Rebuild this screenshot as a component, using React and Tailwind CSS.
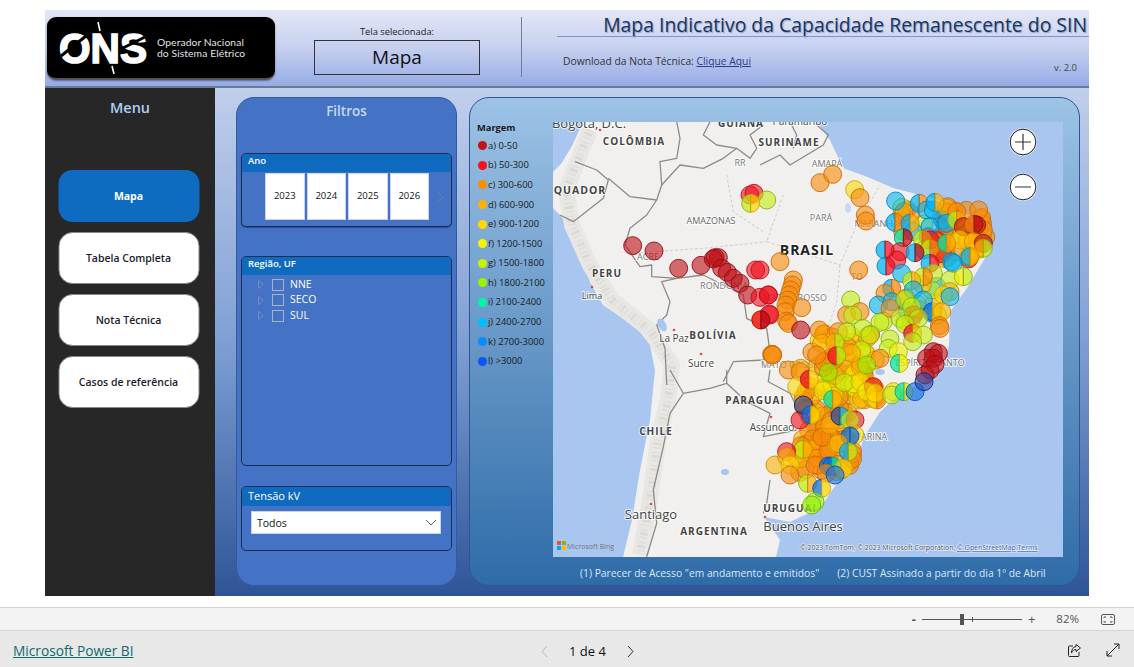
import React from "react";

const C = { a:"#c00f17", b:"#f00f1e", c:"#f98a08", d:"#ffb000", e:"#ffd800", f:"#f0f000", g:"#c4ee10", h:"#96f000", i:"#00e8a0", j:"#00b4f5", k:"#0a6fe8", l:"#0a46c8", m:"#2a4aa8" };
const S = { a:"#8c1015", b:"#b5101c", c:"#c86a08", d:"#c88a08", e:"#c8a808", f:"#b0b008", g:"#8cae10", h:"#6cb408", i:"#08a078", j:"#0884b8", k:"#0a4fb0", l:"#0a3498", m:"#14246e" };
const z4 = ([X,Y]) => [470+X/3, 115+Y/3];
const z5 = ([X,Y]) => [760+X/3, 115+Y/3];
const z6 = ([X,Y]) => [550+X/3, 370+Y/3];
const z11 = ([X,Y]) => [760+X/3, 340+Y/3];
const line = (fn, arr) => arr.map(p => fn(p).map(v => v.toFixed(1)).join(",")).join(" ");

const L4 = [[840,240,"b"],[852,235,"b"],[890,255,"g"],[842,265,"g","e"],[488,392,"a"],[552,408,"a"],[626,460,"a"],[693,451,"a"],[745,428,"a"],[735,428,"a"],[730,432,"a"],[755,460,"a"],[772,472,"a"],[790,490,"a"],[810,505,"a"],[833,540,"a"],[870,547,"b"],[895,540,"b"],[857,465,"b"],[900,600,"b"],[872,614,"c","a"],[905,718,"c"]];
const L5 = [[180,203,"c"],[218,178,"c"],[284,224,"e"],[300,248,"c"],[316,300,"c"],[318,318,"c"],[60,440,"c"],[296,465,"c"],[100,495,"c"],[97,510,"c"],[92,525,"c"],[88,540,"c"],[83,555,"c"],[78,570,"c"],[75,590,"c"],[80,618,"c"],[85,625,"c"],[25,540,"b"],[28,597,"b"],[3,615,"b","a"],[0,465,"b"],[125,578,"c"],[122,645,"a"],[178,645,"c"],[235,650,"c"],
[432,290,"c"],[407,258,"j"],[405,322,"j","c"],[478,265,"j","c"],[500,285,"j"],[520,285,"j"],[562,280,"d"],[590,290,"c"],[525,262,"j","d"],[510,335,"j"],[560,325,"j"],[450,325,"j","d"],[590,315,"g","d"],[670,345,"c"],[650,330,"a"],[610,335,"a"],[642,328,"c","a"],[510,375,"b"],[430,368,"i","a"],[600,375,"e"],[640,380,"d"],[487,373,"g","c"],[510,400,"g","c"],[560,385,"i","d"],[670,385,"a"],[670,400,"d","g"],[420,410,"b"],[410,435,"b"],[375,405,"j","b"],[378,453,"j","b"],[465,413,"j","a"],[510,445,"j","b"],[575,440,"j"],[580,445,"j"],[630,425,"j","d"],[425,475,"j"],[520,475,"g"],[490,485,"g","c"],[455,497,"g","d"],[570,495,"g"],[610,485,"f","g"],[395,520,"j","c"],[570,530,"d"],[550,540,"e"],[570,545,"j"],[375,535,"c"],[355,570,"j"],[395,560,"j"],[390,580,"c"],[460,525,"j"],[490,555,"j"],[435,553,"g"],[460,600,"b"],[455,575,"g"],[517,590,"k","e"],[545,590,"d"],[538,632,"c"],[540,640,"c"],[272,555,"g"],[260,600,"c"],[300,590,"c"],[278,600,"g"],[420,610,"g"],[475,610,"g"],[435,628,"g"],[360,622,"g"],[308,640,"g"],[330,660,"g"],[260,650,"g"],[458,655,"b","d"],[490,660,"g"],[390,672,"g"],[458,680,"g"],[185,685,"d"],[225,682,"d","g"],[385,700,"g"],[415,710,"f"],[305,705,"g"],[275,715,"d"],[170,720,"c"],[230,722,"b","g"],[360,730,"c"],[320,750,"h"],[418,745,"i","f"],[37,718,"c"],
[520,710,"a"],[535,715,"a"],[500,730,"a"],[520,730,"a"],[525,748,"a"],[510,765,"a"],[495,780,"a"]];

// dense fill: deterministic scatter
let seed = 17;
const rnd = () => (seed = (seed * 16807) % 2147483647) / 2147483647;
const dense = [];
const scatter = (fn, x0, y0, x1, y1, n, cs) => { for (let i=0;i<n;i++){ const p = fn([x0+rnd()*(x1-x0), y0+rnd()*(y1-y0)]); dense.push([p[0],p[1],cs[Math.floor(rnd()*cs.length)]]); } };
scatter(z11, 130, 130, 280, 300, 44, ["c","c","d","c"]);
scatter(z11, 100, 290, 280, 400, 42, ["c","c","d","c","c"]);
scatter(z11, 180, 60, 320, 170, 30, ["d","e","d","c","f"]);
scatter(z11, 280, 130, 350, 190, 12, ["e","f","d"]);
scatter(z5, 150, 650, 350, 760, 26, ["d","c","e","d"]);
scatter(z5, 540, 270, 680, 440, 34, ["d","e","c","b","d","c"]);
scatter(z5, 420, 270, 560, 420, 16, ["j","c","b","g"]);
scatter(z5, 360, 500, 540, 620, 14, ["c","j","g","d"]);

const L11 = [[38,45,"c"],[85,90,"c"],[122,85,"d"],[120,95,"c"],[110,140,"e"],[148,118,"b","e"],[205,97,"h"],[253,128,"g"],[300,125,"e"],[340,140,"b"],[320,155,"f"],[350,180,"e","c"],[345,160,"e"],[400,155,"e"],[395,165,"g"],[432,155,"i","g"],[465,155,"k"],[492,125,"m"],[120,240,"b"],[130,195,"m"],[152,225,"k","e"],[218,178,"i","d"],[210,255,"d"],[240,228,"m","j"],[285,240,"b"],[270,240,"g"],[285,285,"e"],[270,288,"k","k"],[235,310,"d"],[265,335,"j","g"],[130,328,"g","d"],[80,335,"b"],[45,375,"d"],[80,350,"d"],[90,375,"e"],[90,405,"c"],[165,375,"c"],[205,378,"k","k"],[215,378,"k","i"],[250,385,"e"],[198,400,"c"],[225,405,"k"],[143,430,"g","d"],[185,445,"k","e"],[165,485,"h"],[155,495,"h"]];

const B = [
  ...dense,
  ...L4.map(([X,Y,...c]) => [...z4([X,Y]), ...c]),
  ...L5.map(([X,Y,...c]) => [...z5([X,Y]), ...c]),
  ...L11.map(([X,Y,...c]) => [...z11([X,Y]), ...c]),
];

function Bubble({ b }) {
  const [x, y, c1, c2] = b;
  const r = 9;
  if (!c2) return <circle cx={x} cy={y} r={r} fill={C[c1]} fillOpacity="0.6" stroke={S[c1]} strokeWidth="0.9" />;
  return (
    <g fillOpacity="0.72" strokeWidth="0.9">
      <path d={`M${x} ${y-r}A${r} ${r} 0 0 0 ${x} ${y+r}Z`} fill={C[c1]} stroke={S[c1]} />
      <path d={`M${x} ${y-r}A${r} ${r} 0 0 1 ${x} ${y+r}Z`} fill={C[c2]} stroke={S[c2]} />
    </g>
  );
}

const land = [
  ...[[583,122],[572,146],[561,164],[553,172],[553,208],[560,215],[570,228],[577,248],[590,282],[603,305],[637,328],[650,345],[655,370]],
  ...[[650,420],[640,470],[632,520],[623,557],[776,557],[780,540],[772,528],[764,517],[790,522],[807,514],[822,506],[832,490],[857,460],[864,437],[880,412],[897,396],[920,384],[943,367],[949,345],[950,312],[967,288],[990,250],[984,228],[973,218],[947,202],[893,188],[870,178],[843,168],[830,140],[817,122]],
].map(p => p.join(",")).join(" ");

function T({ x, y, s = 10, b, sp, fill = "#444", children, anchor = "middle" }) {
  return (
    <text x={x} y={y} fontSize={s} fontWeight={b ? 700 : 400} letterSpacing={sp} fill={fill} textAnchor={anchor} stroke="#fff" strokeOpacity="0.75" strokeWidth="2" paintOrder="stroke">{children}</text>
  );
}

function MapView() {
  const border = { fill: "none", stroke: "#8b8b88", strokeWidth: 1.3, strokeLinejoin: "round" };
  const state = { fill: "none", stroke: "#c8c8c6", strokeWidth: 0.9, strokeDasharray: "3 2" };
  const andes = "590,130 578,160 566,190 572,225 590,265 612,300 650,330 672,365 668,400 658,440 650,500 640,555";
  return (
    <svg viewBox="553 122 510 435" className="w-[510px] h-[435px] block font-['Open_Sans',sans-serif]">
      <rect x="553" y="122" width="510" height="435" fill="#a9c6f1" />
      <polygon points={land} fill="#f1f0ee" />
      <polyline points={andes} fill="none" stroke="#e9e7e3" strokeWidth="16" strokeLinejoin="round" />
      <polyline points={andes} fill="none" stroke="#dcdad6" strokeWidth="8" strokeDasharray="1 2 3 2 1 4" strokeLinejoin="round" />
      <polyline points={line(z4, [[315,140],[380,165],[415,195],[400,250],[310,320],[270,300]])} {...border} />
      <polyline points={line(z4, [[415,190],[480,245],[560,255],[530,300],[480,340],[465,390],[510,455],[545,450],[545,485],[620,490],[575,500],[600,560],[590,600],[560,630],[585,700],[590,810]])} {...border} />
      <polyline points={line(z4, [[560,255],[575,210],[570,140],[620,130],[630,70],[620,20]])} {...border} />
      <polyline points={line(z4, [[575,210],[630,150],[700,160],[760,130],[800,100],[840,130],[860,100],[840,60],[880,30]])} {...border} />
      <polyline points={line(z4, [[720,20],[700,60],[740,90],[800,100]])} {...border} />
      <polyline points={line(z4, [[620,490],[700,480],[820,540],[830,610],[890,640],[900,710],[880,735],[790,740],[760,800]])} {...border} />
      <polyline points={line(z5, [[0,150],[60,120],[90,150],[190,90],[205,60],[170,30]])} {...border} />
      <polyline points={line(z5, [[90,20],[110,60],[100,100]])} {...border} />
      <polyline points={line(z6, [[360,0],[400,70],[360,130],[340,230],[310,360],[320,460],[290,560]])} {...border} />
      <polyline points={line(z6, [[400,70],[480,55],[530,40],[590,95],[660,130],[640,200],[740,180]])} {...border} />
      <polyline points={line(z6, [[530,40],[530,0]])} {...border} />
      <polyline points={line(z6, [[660,0],[655,35],[720,70],[740,110]])} {...border} />
      <polyline points={line(z6, [[660,330],[650,400],[640,430]])} {...border} />
      <polyline points={line(z5, [[70,240],[20,380],[240,450],[290,330],[360,210]])} {...state} />
      <polyline points={line(z5, [[240,450],[230,560],[190,680],[120,720]])} {...state} />
      <polyline points={line(z4, [[770,180],[790,290],[880,350]])} {...state} />
      <polyline points={line(z4, [[480,415],[700,400],[890,380]])} {...state} />
      <ellipse cx="662" cy="325" rx="4" ry="7" fill="#a9c6f1" transform="rotate(-30 662 325)" />
      <ellipse cx="725" cy="472" rx="4" ry="3" fill="#a9c6f1" />
      <ellipse cx="880" cy="372" rx="5" ry="3" fill="#a9c6f1" />
      <ellipse cx="848" cy="208" rx="3" ry="5" fill="#c5d8f5" />

      <T x="589" y="128" s={13}>Bogotá, D.C.</T>
      <T x="634" y="145" b sp={1}>COLÔMBIA</T>
      <T x="741" y="127" b sp={1}>GUIANA</T>
      <T x="800" y="125">Paramaribo</T>
      <T x="789" y="146" b sp={1}>SURINAME</T>
      <T x="580" y="194" b sp={1} s={10.5}>QUADOR</T>
      <T x="740" y="166" fill="#777" s={9}>RR</T>
      <T x="711" y="224" fill="#666" s={9}>AMAZONAS</T>
      <T x="827" y="167" fill="#777" s={9}>AMAPÁ</T>
      <T x="821" y="221" fill="#777" s={9}>PARÁ</T>
      <T x="807" y="255" b sp={1} s={14} fill="#222">BRASIL</T>
      <T x="880" y="227" fill="#777" s={9}>MARANHÃO</T>
      <T x="607" y="277" b sp={1} s={10}>PERU</T>
      <T x="592" y="299" s={9}>Lima</T>
      <T x="648" y="260" fill="#777" s={9}>ACRE</T>
      <T x="724" y="289" fill="#777" s={9}>RONDÔNIA</T>
      <T x="795" y="301" fill="#777" s={9}>MATO GROSSO</T>
      <T x="857" y="280" fill="#777" s={9}>TO</T>
      <T x="713" y="339" b sp={1} s={10}>BOLÍVIA</T>
      <T x="674" y="342" s={10}>La Paz</T>
      <T x="701" y="367" s={10}>Sucre</T>
      <T x="793" y="368" fill="#777" s={9}>MATO GROSSO</T>
      <T x="755" y="404" b sp={1} s={10}>PARAGUAI</T>
      <T x="772" y="431" s={10}>Assuncao</T>
      <T x="656" y="435" b sp={1} s={10}>CHILE</T>
      <T x="651" y="519" s={13}>Santiago</T>
      <T x="714" y="535" b sp={1} s={10}>ARGENTINA</T>
      <T x="790" y="512" b sp={1} s={10}>URUGUAI</T>
      <T x="803" y="531" s={13}>Buenos Aires</T>
      <T x="930" y="366" fill="#777" s={9}>ESPÍRITO SANTO</T>
      <T x="866" y="440" fill="#777" s={9}>CATARINA</T>
      {[[600,130],[592,287],[674,330],[701,354],[771,417],[651,504],[765,517]].map(([x,y],i)=><circle key={i} cx={x} cy={y} r="1.3" fill="#d84a5a"/>)}

      {B.map((b,i)=><Bubble key={i} b={b}/>)}

      <g>
        <rect x="557" y="541" width="4" height="4" fill="#f25022"/><rect x="562" y="541" width="4" height="4" fill="#7fba00"/>
        <rect x="557" y="546" width="4" height="4" fill="#00a4ef"/><rect x="562" y="546" width="4" height="4" fill="#ffb900"/>
        <text x="567" y="549" fontSize="7" fill="#767676">Microsoft Bing</text>
      </g>
      <text x="800" y="550" fontSize="6.9" fill="#555" stroke="#fff" strokeOpacity="0.6" strokeWidth="1.5" paintOrder="stroke">© 2023 TomTom, © 2023 Microsoft Corporation, <tspan fill="#3c63a8" textDecoration="underline">© OpenStreetMap</tspan>  <tspan fill="#3c63a8" textDecoration="underline">Terms</tspan></text>
      {[[1023,142,"p"],[1023,187,"m"]].map(([x,y,k])=>(
        <g key={k}>
          <circle cx={x} cy={y} r="14" fill="#d6e2f6"/>
          <circle cx={x} cy={y} r="12.8" fill="#fff" stroke="#222" strokeWidth="1"/>
          <path d={k==="p"?`M${x-8} ${y}H${x+8}M${x} ${y-8}V${y+8}`:`M${x-8} ${y}H${x+8}`} stroke="#333" strokeWidth="1.2"/>
        </g>
      ))}
    </svg>
  );
}

const legend = [["a","a) 0-50"],["b","b) 50-300"],["c","c) 300-600"],["d","d) 600-900"],["e","e) 900-1200"],["f","f) 1200-1500"],["g","g) 1500-1800"],["h","h) 1800-2100"],["i","i) 2100-2400"],["j","j) 2400-2700"],["k","k) 2700-3000"],["l","l) >3000"]];
const legendCol = { a:"#c0141c", b:"#f5101e", c:"#ff8c00", d:"#ffb000", e:"#ffd800", f:"#f4f400", g:"#c4f400", h:"#98f400", i:"#00f8a8", j:"#00beff", k:"#0a8aff", l:"#0a55f5" };

function Card({ title, className, children, small }) {
  return (
    <div className={`mx-[4px] rounded-[5px] border border-[#1c2c54] bg-[#4472c4] overflow-hidden ${className}`}>
      <div className={`bg-[#0f6bbf] text-white ${small ? "h-[18px] text-[9.5px] font-semibold pl-[6px] leading-[14px]" : "h-[19px] text-[11px] pl-[6px] leading-[18px]"}`}>{title}</div>
      {children}
    </div>
  );
}

const Tri = () => (
  <svg width="6" height="9" viewBox="0 0 6 9" className="shrink-0"><path d="M.5.5 5.5 4.5.5 8.5Z" fill="none" stroke="#6f8cc4" strokeWidth="1"/></svg>
);

export default function App() {
  return (
    <div className="w-[1134px] h-[667px] bg-white overflow-hidden flex flex-col font-['Open_Sans',sans-serif]">
      <div className="ml-[45px] mt-[10px] w-[1044px] h-[586px] flex flex-col shrink-0">
        {/* header */}
        <header className="h-[78px] flex bg-gradient-to-b from-[#e3e7f7] via-[#c6d0ef] to-[#96abe6] border-b-2 border-b-[#6b7a99] shrink-0">
          <div className="ml-[2px] mt-[7px] w-[228px] h-[63px] bg-black rounded-[9px] border-b-2 border-[#555] shadow-[0_1px_2px_#0006] flex items-center pl-[12px] gap-[8px] shrink-0">
            <svg width="90" height="52" viewBox="0 0 90 52" className="shrink-0">
              <text x="0" y="41" fontSize="42" fontWeight="700" fill="#fff" stroke="#fff" strokeWidth="1.6" fontFamily="Liberation Sans" textLength="88" lengthAdjust="spacingAndGlyphs">ONS</text>
              <path d="M2 34 32 10" stroke="#000" strokeWidth="3"/>
              <path d="M60 28 88 14" stroke="#000" strokeWidth="3"/>
              <path d="M39 0 41 9M53 44 55 52" stroke="#fff" strokeWidth="1.6"/>
            </svg>
            <div className="text-[#e2e2e2] text-[10.3px] leading-[11px] font-['Lato',sans-serif] tracking-[0.1px] whitespace-nowrap">Operador Nacional<br/>do Sistema Elétrico</div>
          </div>
          <div className="ml-[39px] w-[166px] shrink-0 flex flex-col items-center">
            <div className="h-[13px] mt-[15px] text-[9.3px] leading-[13px] text-[#222] whitespace-nowrap">Tela selecionada:</div>
            <div className="mt-[2px] w-[166px] h-[35px] border border-[#333] flex items-center justify-center text-[19px] text-[#111]">Mapa</div>
          </div>
          <div className="ml-[41px] mt-[7px] h-[60px] w-px bg-[#6f7d9c] shrink-0" />
          <div className="ml-[35px] flex-1 flex flex-col">
            <div className="h-[26px] text-right pr-[2px] pt-[3px] text-[19.4px] leading-[24px] text-[#1b365f] whitespace-nowrap [text-shadow:1px_1px_1px_#8ea0c8]">Mapa Indicativo da Capacidade Remanescente do SIN</div>
            <div className="h-px bg-[#7b95d0]" />
            <div className="pl-[6px] mt-[17px] text-[10.3px] leading-[14px] text-[#333] whitespace-nowrap">Download da Nota Técnica: <span className="underline text-[#2a3f86]">Clique Aqui</span></div>
            <div className="text-right pr-[12px] mt-[-9px] pt-[2px] text-[9.5px] leading-[14px] text-[#444]">v. 2.0</div>
          </div>
        </header>
        <div className="flex-1 flex min-h-0">
          {/* sidebar */}
          <aside className="w-[170px] bg-[#272727] shrink-0 flex flex-col items-center">
            <div className="mt-[10px] h-[20px] text-[14.5px] leading-[20px] font-semibold text-[#a9d1f5]">Menu</div>
            <div className="mt-[52px] flex flex-col gap-[10px] -translate-x-[1.5px]">
              <div className="w-[141px] h-[52px] pt-[2px] rounded-[14px] bg-[#0f6bbf] text-white flex items-center justify-center text-[10.5px] font-bold">Mapa</div>
              {["Tabela Completa","Nota Técnica","Casos de referência"].map(t=>(
                <div key={t} className="w-[141px] h-[52px] pt-[2px] rounded-[14px] bg-white border border-[#888] flex items-center justify-center text-[10.5px] font-semibold text-[#1c1c2c]">{t}</div>
              ))}
            </div>
          </aside>
          {/* content */}
          <main className="flex-1 flex gap-[12px] pl-[21px] pr-[9px] pt-[9px] pb-[10px] bg-gradient-to-b from-[#c0cfeb] via-[#7f9fd4] to-[#2f5597]">
            <section className="w-[221px] shrink-0 rounded-[18px] bg-[#4472c4] border border-[#35599e] flex flex-col">
              <div className="h-[30px] mt-[1px] mb-[2px] text-center text-[13.5px] leading-[24px] font-semibold text-[#c4dcf4]">Filtros</div>
              <Card title="Ano" small className="mt-[22px] h-[74px] shadow-[0_1px_1px_#1c2c5480]">
                <div className="flex items-center pl-[23px] gap-[2px] pt-[1px]">
                  {["2023","2024","2025","2026"].map(y=>(
                    <div key={y} className="w-[39.5px] h-[47px] bg-white border border-[#c7d3ee] flex items-center justify-center text-[9.5px] text-[#111]">{y}</div>
                  ))}
                  <svg width="9" height="14" viewBox="0 0 9 14" className="ml-[5px]"><path d="M1 1l6 6-6 6" fill="none" stroke="#6d7fa8" strokeWidth="1"/></svg>
                </div>
              </Card>
              <Card title="Região, UF" small className="mt-[29px] h-[210px]">
                <div className="pl-[16px] pt-[2px] flex flex-col">
                  {["NNE","SECO","SUL"].map(t=>(
                    <div key={t} className="h-[15.5px] flex items-center">
                      <Tri />
                      <span className="ml-[8px] w-[12px] h-[12px] border border-[#a9b2c4] shrink-0" />
                      <span className="ml-[6px] text-[10.5px] text-white">{t}</span>
                    </div>
                  ))}
                </div>
              </Card>
              <Card title="Tensão kV" className="mt-[20px] h-[65px]">
                <div className="ml-[9px] mr-[10px] mt-[5px] h-[23px] bg-white border border-[#c7d3ee] flex items-center justify-between pl-[5px] pr-[3px] text-[10.5px] text-[#111]">
                  <span className="translate-y-px">Todos</span>
                  <svg width="12" height="7" viewBox="0 0 12 7"><path d="M1 1l5 5 5-5" fill="none" stroke="#666" strokeWidth="1"/></svg>
                </div>
              </Card>
            </section>
            <section className="w-[611px] shrink-0 rounded-[20px] border border-[#2f5597] bg-gradient-to-b from-[#9dc3e6] to-[#2e6ca8] flex flex-col overflow-hidden">
              <div className="flex pt-[24px] pl-[7px] h-[460px] shrink-0">
                <div className="w-[76px] shrink-0">
                  <div className="h-[16px] -mt-[1px] mb-[-1px] text-[9.3px] leading-[14px] font-bold text-[#1a1a1a]">Margem</div>
                  <div className="grid auto-rows-[19.6px] pl-[1px]">
                    {legend.map(([k,t])=>(
                      <div key={k} className="flex items-center text-[9.4px] text-[#1a1a1a] whitespace-nowrap">
                        <span className="w-[9px] h-[9px] rounded-full mr-[1px] shrink-0" style={{background:legendCol[k]}} />
                        <span>{t}</span>
                      </div>
                    ))}
                  </div>
                </div>
                <MapView />
              </div>
              <div className="flex pl-[110px] pt-[7px] gap-[18px] text-[10.3px] leading-[16px] text-[#dbe7f5] whitespace-nowrap">
                <span>(1) Parecer de Acesso "em andamento e emitidos"</span>
                <span>(2) CUST Assinado a partir do dia 1º de Abril</span>
              </div>
            </section>
          </main>
        </div>
      </div>
      {/* Power BI chrome */}
      <div className="mt-[11px] h-[24px] shrink-0 bg-[#f3f3f3] border-y border-[#d4d4d4] flex items-center justify-end pr-[19px] text-[#555]">
        <span className="text-[13px] font-bold mr-[6px] leading-none">-</span>
        <div className="relative w-[100px] h-px bg-[#555] mr-[6px]">
          <span className="absolute left-[38px] -top-[5px] w-[4px] h-[11px] bg-[#555]" />
          <span className="absolute left-[50px] -top-[2px] w-px h-[5px] bg-[#555]" />
        </div>
        <span className="text-[13px] mr-[21px] leading-none">+</span>
        <span className="text-[11.5px] mr-[22px]">82%</span>
        <svg width="14" height="11" viewBox="0 0 14 11"><rect x=".5" y=".5" width="13" height="10" rx="1.5" fill="none" stroke="#555"/><path d="M3 4V3h2M9 3h2v1M11 7v1H9M5 8H3V7" fill="none" stroke="#555"/></svg>
      </div>
      <footer className="flex-1 bg-[#e8e8e8] flex items-center relative">
        <a className="ml-[13px] mt-[4px] text-[13.7px] text-[#0f6a70] underline font-['Open_Sans',sans-serif]">Microsoft Power BI</a>
        <div className="absolute left-[540px] top-[13px] flex items-center">
          <svg width="9" height="13" viewBox="0 0 9 13"><path d="M7 1 2 6.5 7 12" fill="none" stroke="#b5b5b5" strokeWidth="1"/></svg>
          <span className="ml-[20px] w-[38px] text-[13px] font-medium leading-[14px] text-[#111] whitespace-nowrap">1 de 4</span>
          <svg width="9" height="13" viewBox="0 0 9 13" className="ml-[19px]"><path d="M2 1l5 5.5L2 12" fill="none" stroke="#333" strokeWidth="1"/></svg>
        </div>
        <svg width="15" height="15" viewBox="0 0 15 15" className="absolute left-[1067px] top-[12px]"><path d="M6 3H2.5a1 1 0 0 0-1 1v8.5a1 1 0 0 0 1 1H11a1 1 0 0 0 1-1V9" fill="none" stroke="#222"/><path d="M9 1.5 13.5 5 9 8.5V6.5C7 6.5 5.5 7.5 4.5 10c0-3.5 1.5-6 4.5-6.5Z" fill="none" stroke="#222"/></svg>
        <svg width="14" height="14" viewBox="0 0 14 14" className="absolute left-[1106px] top-[12px]"><path d="M1 13 13 1M8 1h5v5M1 8v5h5" fill="none" stroke="#222"/></svg>
      </footer>
    </div>
  );
}
